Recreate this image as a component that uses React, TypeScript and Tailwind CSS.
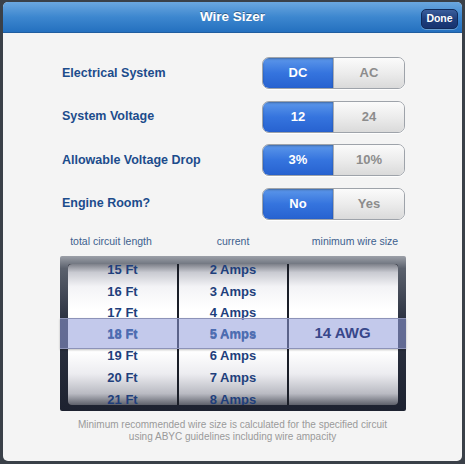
import React from 'react';

const FONT = "font-['Liberation_Sans',Arial,sans-serif]";

const settings = [
  { label: 'Electrical System', options: ['DC', 'AC'] },
  { label: 'System Voltage', options: ['12', '24'] },
  { label: 'Allowable Voltage Drop', options: ['3%', '10%'] },
  { label: 'Engine Room?', options: ['No', 'Yes'] },
];

const lengths = ['15 Ft', '16 Ft', '17 Ft', '18 Ft', '19 Ft', '20 Ft', '21 Ft'];
const amps = ['2 Amps', '3 Amps', '4 Amps', '5 Amps', '6 Amps', '7 Amps', '8 Amps'];

function Segmented({ options }: { options: string[] }) {
  return (
    <div className="flex w-[143px] h-[32px] rounded-[7px] border border-[#9ea3aa] overflow-hidden shadow-[0_1px_0_rgba(255,255,255,0.9)]">
      <div className="flex-1 flex items-center justify-center bg-[linear-gradient(to_bottom,#5c97ea,#3574de_50%,#2762d0)] text-white font-bold text-[13px] shadow-[inset_0_1px_2px_rgba(0,0,0,0.3)]">
        {options[0]}
      </div>
      <div className="flex-1 flex items-center justify-center bg-[linear-gradient(to_bottom,#fbfbfb,#ececec_50%,#dadada)] text-[#8c8c8c] font-bold text-[13px] border-l border-[#a8acb2]">
        {options[1]}
      </div>
    </div>
  );
}

function Wheel({ items, className }: { items: string[]; className?: string }) {
  return (
    <div className={`relative overflow-hidden bg-[linear-gradient(to_bottom,#7d8089_0%,#c9cad1_6%,#f3f3f6_16%,#ffffff_32%,#ffffff_62%,#ececf0_78%,#b9bac2_92%,#5e616b_100%)] ${className ?? ''}`}>
      <div className="flex flex-col mt-[-5px]">
        {items.map((t) => (
          <div key={t} className="h-[21.6px] flex items-center justify-center text-[13px] font-bold text-[#1f3f7c]">
            {t}
          </div>
        ))}
      </div>
    </div>
  );
}

export default function App() {
  return (
    <div className={`w-[465px] h-[464px] bg-[#3a4048] pt-[2px] px-[3px] pb-[3px] ${FONT}`}>
      <div className="h-full rounded-[5px] overflow-hidden bg-[#f4f4f4] flex flex-col">
        <div className="relative h-[31px] shrink-0 flex items-center justify-center bg-[linear-gradient(to_bottom,#6ba7df,#3d87cf_50%,#2470bf)] border-b border-[#1f5d9f]">
          <span className="text-white font-bold text-[13.5px] [text-shadow:0_-1px_0_rgba(0,0,0,0.35)]">Wire Sizer</span>
          <div className="absolute right-[4px] top-[7px] w-[37px] h-[20px] rounded-[5px] border border-[#102a5a] bg-[linear-gradient(to_bottom,#3b5e9c,#1f3f7c_50%,#173370)] flex items-center justify-center text-white font-bold text-[10.5px] shadow-[0_1px_0_rgba(255,255,255,0.3)]">
            Done
          </div>
        </div>

        <div className="flex flex-col gap-[11.5px] pt-[24px] pl-[59px] pr-[57px]">
          {settings.map((s) => (
            <div key={s.label} className="flex items-center justify-between h-[32px]">
              <span className="text-[#1c4c8c] font-bold text-[12.5px]">{s.label}</span>
              <Segmented options={s.options} />
            </div>
          ))}
        </div>

        <div className="flex mt-[13.5px] pl-[47px] text-[10.5px] text-[#3d5f8e] h-[18px] items-center">
          <span className="w-[122px] text-center">total circuit length</span>
          <span className="w-[122px] text-center">current</span>
          <span className="w-[122px] text-center">minimum wire size</span>
        </div>

        <div className="relative ml-[57px] mt-[5px] w-[346px] h-[155px] shrink-0 rounded-[2px] bg-[linear-gradient(to_bottom,#9ca0a8,#5b616d_8%,#2d3342_40%,#1d2230_100%)] px-[8px] pt-[8px] pb-[6px]">
          <div className="flex h-full gap-[2px] bg-[#1a1e28] rounded-[3px]">
            <Wheel items={lengths} className="w-[109px] rounded-l-[4px]" />
            <Wheel items={amps} className="w-[108px]" />
            <Wheel items={[]} className="flex-1 rounded-r-[4px]" />
          </div>
          <div className="absolute left-0 right-0 top-[62px] h-[31px] flex border-y border-[#8d93b8] bg-[rgba(145,156,218,0.55)] shadow-[0_1px_2px_rgba(0,0,0,0.25)]">
            <div className="w-[117px] flex items-center justify-center text-[13px] font-bold text-[#4b6db2] pl-[8px]">18 Ft</div>
            <div className="w-[110px] flex items-center justify-center text-[13px] font-bold text-[#4b6db2] pl-[2px]">5 Amps</div>
            <div className="flex-1 flex items-center justify-center text-[15px] font-bold text-[#38478a] pr-[8px]">14 AWG</div>
          </div>
        </div>

        <div className="mt-[8px] text-center text-[10px] leading-[11.5px] text-[#9a9a9a]">
          <div>Minimum recommended wire size is calculated for the specified circuit</div>
          <div>using ABYC guidelines including wire ampacity</div>
        </div>
      </div>
    </div>
  );
}
